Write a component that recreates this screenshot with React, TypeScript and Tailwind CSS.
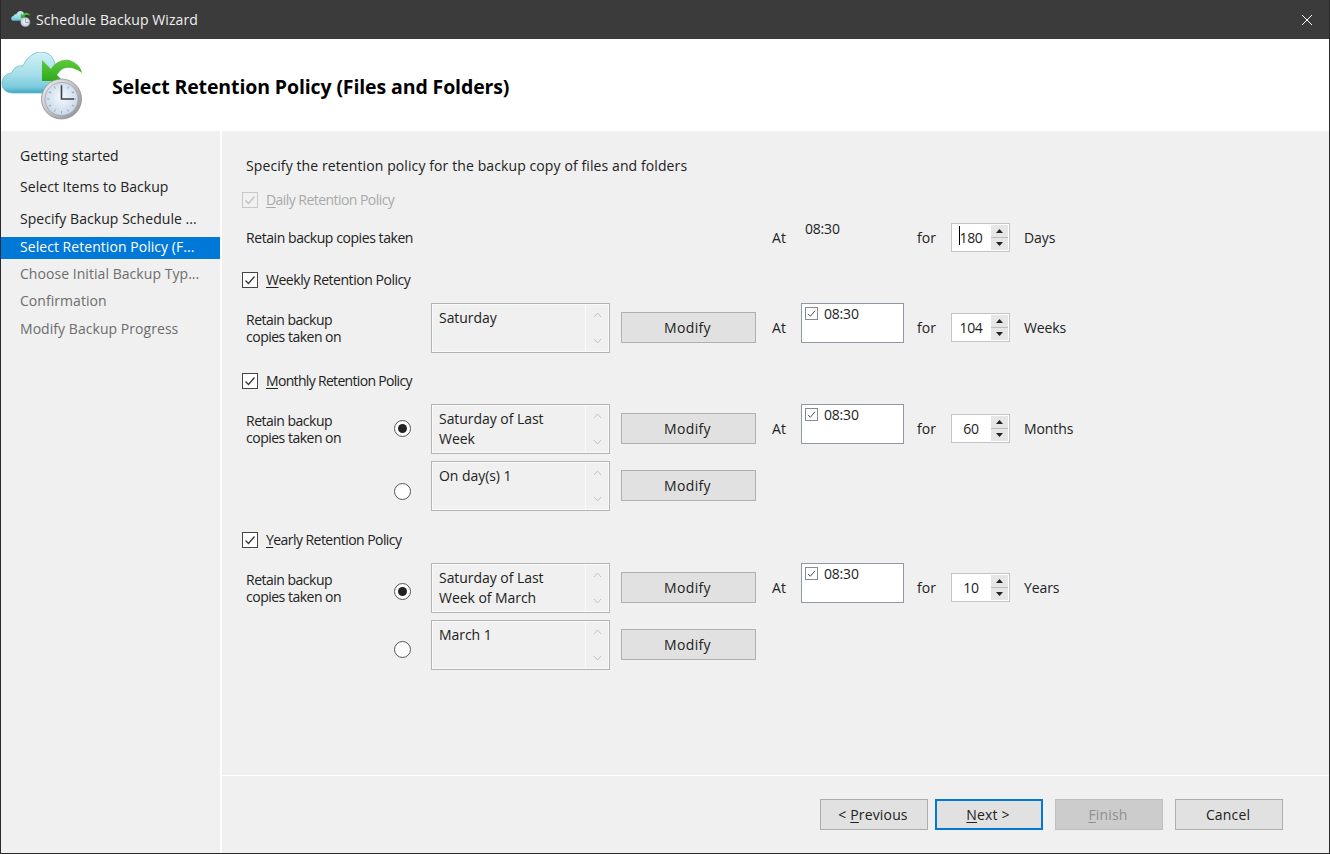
import React from "react";

const font = "font-['Open_Sans','Noto_Sans',sans-serif]";

function Logo({ w, id }: { w: number; id: string }) {
  const ticks = [0, 30, 60, 90, 120, 150, 180, 210, 240, 270, 300, 330];
  return (
    <svg width={w} height={(w * 68) / 84} viewBox="0 0 84 68" className="block shrink-0">
      <defs>
        <linearGradient id={`${id}c`} x1="0" y1="0" x2="0" y2="1">
          <stop offset="0" stopColor="#d2f0f5" />
          <stop offset="0.55" stopColor="#a5deea" />
          <stop offset="0.85" stopColor="#7ccbdd" />
          <stop offset="1" stopColor="#3fa6c2" />
        </linearGradient>
        <radialGradient id={`${id}f`} cx="0.5" cy="0.45" r="0.6">
          <stop offset="0" stopColor="#f5f8fc" />
          <stop offset="1" stopColor="#c5d5e8" />
        </radialGradient>
        <linearGradient id={`${id}r`} x1="0" y1="0" x2="1" y2="1">
          <stop offset="0" stopColor="#f4f4f4" />
          <stop offset="1" stopColor="#8c8c8c" />
        </linearGradient>
        <linearGradient id={`${id}a`} x1="0" y1="0" x2="0" y2="1">
          <stop offset="0" stopColor="#5fcb3d" />
          <stop offset="1" stopColor="#2ea81c" />
        </linearGradient>
      </defs>
      <path d="M12 41C4 41 1 36 1 31C1 25 6 21 11 21C12 16 17 13 22 14C25 6 33 0 40 0C47 0 52 4 54 12L56 41Z" fill={`url(#${id}c)`} stroke="#62bcd3" strokeWidth="0.8" />
      <path d="M41 8L50 17C54 10 62 7 68 8C75 10 80 15 81 21C76 17 70 15 65 16C61 16 58 20 56 23L62 29L41 29Z" fill={`url(#${id}a)`} />
      <circle cx="60.5" cy="47" r="20" fill={`url(#${id}r)`} stroke="#8e8e8e" strokeWidth="0.8" />
      <circle cx="60.5" cy="47" r="16.5" fill={`url(#${id}f)`} stroke="#97a0aa" strokeWidth="0.7" />
      {ticks.map((t) => (
        <rect key={t} x="60" y="32.5" width="1" height="2.5" fill="#9aa6b4" transform={`rotate(${t} 60.5 47)`} />
      ))}
      <path d="M59.7 33.5H61.3V46.2H73V47.8H59.7Z" fill="#39414c" />
    </svg>
  );
}

function Check({ disabled = false, small = false }: { disabled?: boolean; small?: boolean }) {
  const box = small ? "w-[13px] h-[13px] border-[#8a8a8a] bg-white" : disabled ? "w-[16px] h-[16px] border-[#c8c8c8]" : "w-[16px] h-[16px] border-[#444] bg-white";
  const stroke = disabled ? "#c0c0c0" : small ? "#444" : "#333";
  return (
    <span className={`${box} border flex items-center justify-center shrink-0`}>
      <svg viewBox="0 0 14 14" className="w-full h-full" fill="none">
        <path d="M2.5 7.5L5.5 10.5L11.5 3.5" stroke={stroke} strokeWidth="1.2" />
      </svg>
    </span>
  );
}

function Heading({ label, rest, mt, track, disabled = false }: { label: string; rest: string; mt: string; track: string; disabled?: boolean }) {
  return (
    <div className={`flex items-center h-[20px] -ml-[4px] ${mt}`}>
      <Check disabled={disabled} />
      <span className={`ml-[8px] text-[14px] leading-[20px] ${track} ${disabled ? "text-[#a9a9a9]" : "text-[#222]"}`}>
        <span className="underline underline-offset-2">{label}</span>
        {rest}
      </span>
    </div>
  );
}

function ListBox({ text }: { text: string }) {
  return (
    <div className="w-[179px] h-[50px] border border-[#b4b4b4] bg-[#f0f0f0] flex shrink-0 shadow-[inset_0_0_0_1px_#fafafa]">
      <div className="flex-1 pl-[7px] pt-[4px] pr-[20px] text-[14px] leading-[20px] tracking-[-0.05px] text-[#222]">{text}</div>
      <div className="w-[23px] my-[1px] mr-[1px] border-l border-[#fafafa] flex flex-col items-center justify-between py-[7px]">
        <svg width="9" height="6" viewBox="0 0 9 6" fill="none"><path d="M1 5L4.5 1L8 5" stroke="#c2c2c2" /></svg>
        <svg width="9" height="6" viewBox="0 0 9 6" fill="none"><path d="M1 1L4.5 5L8 1" stroke="#c2c2c2" /></svg>
      </div>
    </div>
  );
}

function Modify() {
  return (
    <div className="w-[135px] h-[31px] border border-[#b0b0b0] bg-[#e1e1e1] flex items-center justify-center pr-[2px] text-[14px] text-[#222] shrink-0 tracking-[0.35px]">
      Modify
    </div>
  );
}

function Radio({ on }: { on: boolean }) {
  return (
    <span className="w-[17px] h-[17px] -ml-[1px] rounded-full border border-[#555] bg-white flex items-center justify-center">
      {on && <span className="w-[9px] h-[9px] rounded-full bg-[#222]" />}
    </span>
  );
}

function Spinner({ value, caret = false }: { value: string; caret?: boolean }) {
  return (
    <div className="w-[59px] h-[29px] border border-[#c4c4c4] bg-white flex shrink-0">
      <div className="relative flex-1 flex items-center justify-center text-[14px] text-[#222] tracking-[-0.3px]">
        {caret && <span className="absolute left-[7px] top-[2px] w-[1px] h-[19px] bg-black" />}
        {value}
      </div>
      <div className="w-[19px] flex flex-col bg-[#e6e6e6] border border-white">
        <div className="flex-1 flex items-center justify-center border-b border-[#bdbdbd]">
          <svg width="7" height="4" viewBox="0 0 7 4"><path d="M0 4L3.5 0L7 4Z" fill="#222" /></svg>
        </div>
        <div className="flex-1 flex items-center justify-center">
          <svg width="7" height="4" viewBox="0 0 7 4"><path d="M0 0L3.5 4L7 0Z" fill="#222" /></svg>
        </div>
      </div>
    </div>
  );
}

function TimeAndSpin({ value, unit }: { value: string; unit: string }) {
  return (
    <>
      <span className="ml-[16px] w-[29px] text-[14px] text-[#222] -mt-[1px] tracking-[0.2px]">At</span>
      <div className="w-[103px] h-[40px] border border-[#8f98a3] bg-white self-start -mt-[9px] flex items-start pl-[3px] shrink-0 text-[14px] leading-[20px] text-[#222]">
        <span className="mt-[3px]"><Check small /></span>
        <span className="ml-[6px] tracking-[-0.2px]">08:30</span>
      </div>
      <span className="ml-[13px] w-[34px] text-[14px] text-[#222] -mt-[1px]">for</span>
      <Spinner value={value} />
      <span className="ml-[14px] text-[14px] text-[#222] tracking-[-0.1px] -mt-[1px]">{unit}</span>
    </>
  );
}

function Label() {
  return (
    <div className="w-[149px] text-[14px] leading-[17px] text-[#222] tracking-[-0.5px] shrink-0">
      Retain backup<br />copies taken on
    </div>
  );
}

function PolicyRow({ mt, radioCls, on, text, time }: { mt: string; radioCls?: string; on?: boolean; text: string; time?: { value: string; unit: string } }) {
  return (
    <div className={`flex items-start h-[50px] ${mt}`}>
      <div className="w-[149px] shrink-0 pt-[8px]">{time ? <Label /> : null}</div>
      <div className="w-[36px] shrink-0 h-full flex items-center">
        {radioCls && <span className={radioCls}><Radio on={!!on} /></span>}
      </div>
      <ListBox text={text} />
      <div className="flex items-center mt-[9px]">
        <span className="ml-[11px]"><Modify /></span>
        {time && <TimeAndSpin value={time.value} unit={time.unit} />}
      </div>
    </div>
  );
}

const nav: { t: string; cls: string; h: string; pt: string }[] = [
  { t: "Getting started", cls: "text-[#222]", h: "h-[31px]", pt: "pt-[5px]" },
  { t: "Select Items to Backup", cls: "text-[#222]", h: "h-[32px]", pt: "pt-[5px]" },
  { t: "Specify Backup Schedule ...", cls: "text-[#222]", h: "h-[33px]", pt: "pt-[5px]" },
  { t: "Select Retention Policy (F...", cls: "bg-[#0078d7] text-white", h: "h-[22px]", pt: "pt-0" },
  { t: "Choose Initial Backup Typ...", cls: "text-[#6d6d6d]", h: "h-[27px]", pt: "pt-[5px]" },
  { t: "Confirmation", cls: "text-[#6d6d6d]", h: "h-[28px]", pt: "pt-[5px]" },
  { t: "Modify Backup Progress", cls: "text-[#6d6d6d]", h: "h-[28px]", pt: "pt-[5px]" },
];

function FootBtn({ children, cls = "", ml }: { children: React.ReactNode; cls?: string; ml: string }) {
  return (
    <div className={`w-[108px] h-[31px] flex items-center justify-center pr-[2px] text-[14px] tracking-[0.15px] border ${ml} ${cls}`}>{children}</div>
  );
}

export default function App() {
  return (
    <div className={`${font} w-[1330px] h-[854px] overflow-hidden border border-[#2a2a2a] border-t-0 flex flex-col bg-white`}>
      <div className="h-[39px] bg-[#3b3b3b] flex items-center pl-[10px] pr-[16px] text-white shrink-0">
        <Logo w={20} id="s" />
        <span className="ml-[5px] text-[14px] tracking-[0.1px] text-[#f0f0f0]">Schedule Backup Wizard</span>
        <svg className="ml-auto" width="12" height="12" viewBox="0 0 12 12" fill="none"><path d="M1 1L11 11M11 1L1 11" stroke="#fff" strokeWidth="1" /></svg>
      </div>
      <div className="h-[92px] bg-white flex items-center shrink-0">
        <span className="mt-[2px]"><Logo w={84} id="b" /></span>
        <h1 className="ml-[27px] text-[19.5px] font-bold text-black tracking-[-0.12px] mt-[4px]">Select Retention Policy (Files and Folders)</h1>
      </div>
      <div className="flex-1 flex min-h-0">
        <div className="w-[219px] bg-[#f0f0f0] pt-[10px] shrink-0">
          {nav.map((n) => (
            <div key={n.t} className={`${n.h} ${n.pt} pl-[19px] text-[14px] leading-[20px] tracking-[0.05px] whitespace-nowrap ${n.cls}`}>
              {n.t}
            </div>
          ))}
        </div>
        <div className="w-[2px] bg-white shrink-0" />
        <div className="flex-1 flex flex-col bg-[#f0f0f0]">
          <div className="h-[644px] pl-[24px] border-b border-white box-content">
            <div className="pt-[25px] text-[14px] leading-[20px] tracking-[0.1px] text-[#222]">Specify the retention policy for the backup copy of files and folders</div>
            <Heading label="D" rest="aily Retention Policy" mt="mt-[14px]" track="tracking-[-0.55px]" disabled />
            <div className="flex items-center h-[29px] mt-[13px]">
              <div className="w-[526px] text-[14px] tracking-[-0.43px] text-[#222] shrink-0">Retain backup copies taken</div>
              <span className="w-[29px] text-[14px] text-[#222] tracking-[0.2px]">At</span>
              <span className="w-[103px] pl-[4px] -mt-[18px] text-[14px] text-[#222] tracking-[-0.2px]">08:30</span>
              <span className="ml-[13px] w-[34px] text-[14px] text-[#222]">for</span>
              <Spinner value="180" caret />
              <span className="ml-[14px] text-[14px] text-[#222] tracking-[-0.1px]">Days</span>
            </div>
            <Heading label="W" rest="eekly Retention Policy" mt="mt-[18px]" track="tracking-[-0.46px]" />
            <PolicyRow mt="mt-[13px]" text="Saturday" time={{ value: "104", unit: "Weeks" }} />
            <Heading label="M" rest="onthly Retention Policy" mt="mt-[18px]" track="tracking-[-0.68px]" />
            <PolicyRow mt="mt-[13px]" radioCls="-mt-[1px]" on text="Saturday of Last Week" time={{ value: "60", unit: "Months" }} />
            <PolicyRow mt="mt-[7px]" radioCls="mt-[10px]" text="On day(s) 1" />
            <Heading label="Y" rest="early Retention Policy" mt="mt-[19px]" track="tracking-[-0.55px]" />
            <PolicyRow mt="mt-[13px]" radioCls="mt-[7px]" on text="Saturday of Last Week of March" time={{ value: "10", unit: "Years" }} />
            <PolicyRow mt="mt-[7px]" radioCls="mt-[9px]" text="March 1" />
          </div>
          <div className="flex-1 flex items-start pl-[598px] pt-[23px]">
            <FootBtn ml="" cls="border-[#adadad] bg-[#e1e1e1] text-[#222]">&lt;&nbsp;<span className="underline underline-offset-2">P</span>revious</FootBtn>
            <FootBtn ml="ml-[7px]" cls="border-2 border-[#0078d7] bg-[#e1e1e1] text-[#222]"><span className="underline underline-offset-2">N</span>ext &gt;</FootBtn>
            <FootBtn ml="ml-[12px]" cls="border-[#bfbfbf] bg-[#cccccc] text-[#8f8f8f]"><span className="underline underline-offset-2">F</span>inish</FootBtn>
            <FootBtn ml="ml-[12px]" cls="border-[#adadad] bg-[#e1e1e1] text-[#222]">Cancel</FootBtn>
          </div>
        </div>
      </div>
    </div>
  );
}
